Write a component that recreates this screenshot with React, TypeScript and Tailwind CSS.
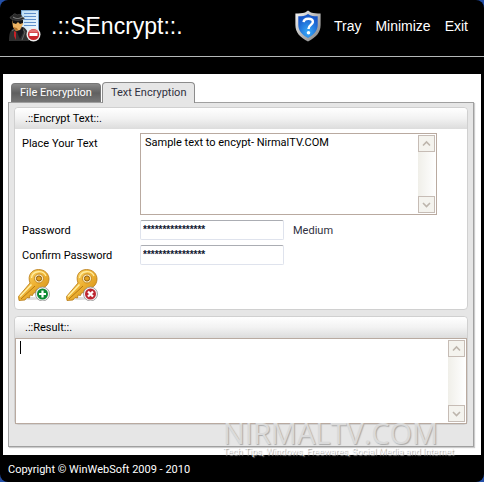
import { useState } from "react";

const menu = ["Tray", "Minimize", "Exit"];
const tabs = ["File Encryption", "Text Encryption"];

function SpyIcon() {
  return (
    <svg viewBox="0 0 32 32" className="size-8 shrink-0" aria-hidden="true">
      <defs>
        <linearGradient id="sheet" x1="0" y1="0" x2="1" y2="1">
          <stop offset="0" stopColor="#b9dcf5" />
          <stop offset="1" stopColor="#f7fbff" />
        </linearGradient>
      </defs>
      <rect x="12.5" y=".5" width="17" height="23" fill="url(#sheet)" stroke="#7aa6cf" />
      <path d="M15 3.500h12M15 6.500h12M15 9.500h12M15 12.500h12M15 15.500h12" stroke="#5f8fca" />
      <path d="M0 31c0-7 1-12 6-13l8-1c4 2 6 6 6 14z" fill="#303030" />
      <path d="M3 21l4-3 3 7M13 18l3 4-3 8" fill="none" stroke="#666" />
      <path d="M6 18l5 2 3-3v6l-3 6z" fill="#15151a" />
      <path d="M5 21l2 1v8l-2-4z" fill="#c62127" />
      <path d="M3 10h10l1 4-3 6-4 1-3-4z" fill="#edb463" />
      <path d="M4 17l4 1 1 2-2 1z" fill="#b5742c" />
      <path d="M3 10h11v3l-3 1-2-2-2 2-3-1z" fill="#111" />
      <path d="M1 8c0-2 3-2 3-3 1-2 3-1 4 0 2-1 5-1 5 2 1 1 3 0 2 2-3 2-11 2-14-1z" fill="#292929" stroke="#555" strokeWidth=".6" />
      <path d="M4 7c3 2 6 2 9 0" fill="none" stroke="#8a8a8a" />
      <circle cx="24.5" cy="24.5" r="7" fill="#eee" />
      <circle cx="24.5" cy="24.5" r="5.6" fill="#c9252b" />
      <path d="M19.500 22.500a5.400 5.400 0 0 1 10 0z" fill="#e46f70" />
      <rect x="20.5" y="23" width="8" height="3" fill="#fff" />
    </svg>
  );
}

function ShieldIcon() {
  return (
    <svg viewBox="0 0 28 33" className="h-8 w-7" aria-hidden="true">
      <defs>
        <linearGradient id="rim" x1="0" y1="0" x2="1" y2="1">
          <stop offset="0" stopColor="#fafafa" />
          <stop offset=".5" stopColor="#b8b8b8" />
          <stop offset="1" stopColor="#808080" />
        </linearGradient>
        <radialGradient id="face" cx=".5" cy=".75" r=".7">
          <stop offset="0" stopColor="#38aaf8" />
          <stop offset="1" stopColor="#1554c8" />
        </radialGradient>
      </defs>
      <path d="M14 .5l3 2c3 1 6 1 10 1v12c0 8-5 13-13 17C6 28.500 1 23.500 1 15.500v-12c4 0 7 0 10-1z" fill="url(#rim)" />
      <path d="M14 4c3 2 6 2.500 10 2.500v9c0 6-4 10-10 13.500-6-3.500-10-7.500-10-13.500v-9C8 6.500 11 6 14 4z" fill="url(#face)" />
      <path d="M9.500 12.500c.5-5 10-4.500 9.500 0-.5 3-4.500 3-4.500 7" fill="none" stroke="#fff" strokeWidth="2.600" />
      <circle cx="14.500" cy="23.500" r="1.800" fill="#fff" />
    </svg>
  );
}

function KeyIcon({ kind }: { kind: "add" | "remove" }) {
  const gold = `gold-${kind}`;
  return (
    <svg viewBox="0 0 32 32" className="size-8" aria-hidden="true">
      <defs>
        <linearGradient id={gold} x1="0" y1="0" x2="1" y2="1">
          <stop offset="0" stopColor="#ffdf78" />
          <stop offset=".5" stopColor="#eeb233" />
          <stop offset="1" stopColor="#c98510" />
        </linearGradient>
      </defs>
      <ellipse cx="14" cy="29.500" rx="11" ry="1.500" fill="#dedede" />
      <path
        d="M12 14C9 6 14 .500 20.500 .500 27 .500 31 5 31 10c0 6-5 10.500-11 10l-2 1v2.500l-2.500.5-1 2.500-2.500-.5-.5 3-2.500-.5L7 31l-6 .5-.5-4z"
        fill={`url(#${gold})`}
        stroke="#b87812"
        strokeWidth=".8"
      />
      <path d="M2 27.500L13.500 15.500" fill="none" stroke="#fff0a5" strokeWidth="1.500" />
      <path d="M3 30l14-13" stroke="#b5770f" />
      <path d="M13.500 9c1-8 12-8 14.500-2" fill="none" stroke="#ffec9e" strokeWidth="1.300" />
      <circle cx="21" cy="9.500" r="4.500" fill="#fff3cb" stroke="#c58a20" />
      <circle cx="21" cy="9.500" r="2.600" fill="#e3a01e" stroke="#8d5a10" />
      <circle cx="24.500" cy="25" r="7" fill="#f3f3f3" stroke="#8f8f8f" strokeWidth=".8" />
      <circle cx="24.500" cy="25" r="5.500" fill={kind === "add" ? "#0c8a32" : "#bd2630"} />
      <path
        d={kind === "add" ? "M24.500 21.500v7M21 25h7" : "M22 22.500l5 5M27 22.500l-5 5"}
        stroke="#fff"
        strokeWidth="2.200"
      />
    </svg>
  );
}

function ScrollButton({ dir }: { dir: "up" | "down" }) {
  return (
    <button
      type="button"
      aria-label={`Scroll ${dir}`}
      className="flex size-[17px] items-center justify-center border border-[#c6bcb5] bg-[#f4f3ee]"
    >
      <svg viewBox="0 0 9 9" className="size-[9px]" fill="none" stroke="#bdb5ac" strokeWidth="1.6">
        <path d={dir === "up" ? "M1 6.500L4.500 3L8 6.500" : "M1 3L4.500 6.500L8 3"} />
      </svg>
    </button>
  );
}

function ScrollBar() {
  return (
    <div className="flex w-[17px] shrink-0 flex-col justify-between bg-linear-to-r from-[#f0efe9] to-[#fefefe]">
      <ScrollButton dir="up" />
      <ScrollButton dir="down" />
    </div>
  );
}

function GroupTitle({ children }: { children: string }) {
  return (
    <h2 className="h-[21px] rounded-t-sm bg-linear-to-b from-white via-[#f2f2f2] to-[#dcdcdc] pl-2.5 leading-[22px]">
      {children}
    </h2>
  );
}

export default function App() {
  const [active, setActive] = useState(tabs[1]);

  return (
    <div className="min-h-screen bg-[#2450a8]">
      <div className="flex min-h-screen flex-col rounded-lg bg-black font-[Roboto,Tahoma,sans-serif] text-[11px] text-black">
        <header className="flex h-[57px] items-center justify-between border-b border-[#b4b8b8] pr-4 pb-1 pl-[9px] font-['Liberation_Sans',Arial,sans-serif] text-white">
          <div className="flex items-center gap-2.5">
            <SpyIcon />
            <h1 className="text-[23px]">.::SEncrypt::.</h1>
          </div>
          <nav className="flex items-center gap-3.5 text-sm">
            <button type="button" aria-label="Help" className="-mr-0.5">
              <ShieldIcon />
            </button>
            {menu.map((item) => (
              <button key={item} type="button">
                {item}
              </button>
            ))}
          </nav>
        </header>

        <main className="mx-[3px] mt-[17px] flex flex-1 flex-col bg-white pt-2 pr-[7px] pb-2 pl-[5px]">
          <div role="tablist" className="flex items-end gap-px pl-[3px]">
            {tabs.map((tab) => (
              <button
                key={tab}
                type="button"
                role="tab"
                aria-selected={tab === active}
                onClick={() => setActive(tab)}
                className={
                  tab === active
                    ? "relative z-10 -mb-px h-[21px] rounded-t border border-b-0 border-[#8c8c8c] bg-[#e6e6e6] px-2 text-[#303040]"
                    : "h-[19px] rounded-t border border-b-0 border-[#777] bg-linear-to-b from-[#8a8a8a] via-[#606060] to-[#777] px-2 text-white"
                }
              >
                {tab}
              </button>
            ))}
          </div>

          <div className="relative flex flex-1 flex-col gap-1.5 border border-[#a0a0a0] bg-[#e6e6e6] px-[5px] pt-1 shadow-[1px_1px_1px_#ccc]">
            <section className="rounded border border-[#d0d0d0] bg-white pb-2">
              <GroupTitle>.::Encrypt Text::.</GroupTitle>
              <div className="grid grid-cols-[118px_1fr] gap-y-[5px] pt-1 pl-[7px]">
                <label htmlFor="source" className="pt-[3px]">
                  Place Your Text
                </label>
                <div className="mr-[30px] flex h-[82px] border border-[#b9aaa0] p-px">
                  <textarea
                    id="source"
                    defaultValue="Sample text to encypt- NirmalTV.COM"
                    className="min-w-0 flex-1 resize-none px-[3px] leading-4 outline-none"
                  />
                  <ScrollBar />
                </div>
                <label htmlFor="password" className="pt-[3px]">
                  Password
                </label>
                <div className="flex items-center gap-[9px]">
                  <input
                    id="password"
                    defaultValue="****************"
                    className="h-5 w-36 rounded-xs border border-[#dfe3ed] border-t-[#abadb3] px-0.5 pb-0.5 font-['Liberation_Sans',Arial,sans-serif] text-[10px] font-bold text-[#101830]"
                  />
                  <span className="pt-0.5 text-[#303040]">Medium</span>
                </div>
                <label htmlFor="confirm" className="pt-[3px]">
                  Confirm Password
                </label>
                <input
                  id="confirm"
                  defaultValue="****************"
                  className="h-5 w-36 rounded-xs border border-[#dfe3ed] border-t-[#abadb3] px-0.5 pb-0.5 font-['Liberation_Sans',Arial,sans-serif] text-[10px] font-bold text-[#101830]"
                />
              </div>
              <div className="mt-1 flex gap-4 pl-[3px]">
                <button type="button" aria-label="Encrypt">
                  <KeyIcon kind="add" />
                </button>
                <button type="button" aria-label="Decrypt">
                  <KeyIcon kind="remove" />
                </button>
              </div>
            </section>

            <section className="rounded border border-[#d0d0d0] bg-white">
              <GroupTitle>.::Result::.</GroupTitle>
              <div className="relative flex h-[86px] border border-[#b9aaa0] p-px">
                <textarea aria-label="Result" className="min-w-0 flex-1 resize-none px-[3px] outline-none" />
                <ScrollBar />
                <span className="absolute top-0.5 left-1 h-[13px] w-px bg-black" />
              </div>
            </section>

            <div className="pointer-events-none absolute right-5 -bottom-[11px] w-[230px] whitespace-nowrap">
              <p className="font-['Open_Sans',sans-serif] text-[29px] leading-[24px] text-[#dadada] [text-shadow:1px_1px_1px_#aaa]">
                NIRMALTV.COM
              </p>
              <p className="pt-0.5 text-[9px] leading-[10px] text-white [text-shadow:1px_1px_1px_#999]">
                Tech Tips, Windows, Freewares, Social Media and Internet
              </p>
            </div>
          </div>
        </main>

        <footer className="flex h-[27px] items-center px-2 pt-1 text-white">Copyright © WinWebSoft 2009 - 2010</footer>
      </div>
    </div>
  );
}
